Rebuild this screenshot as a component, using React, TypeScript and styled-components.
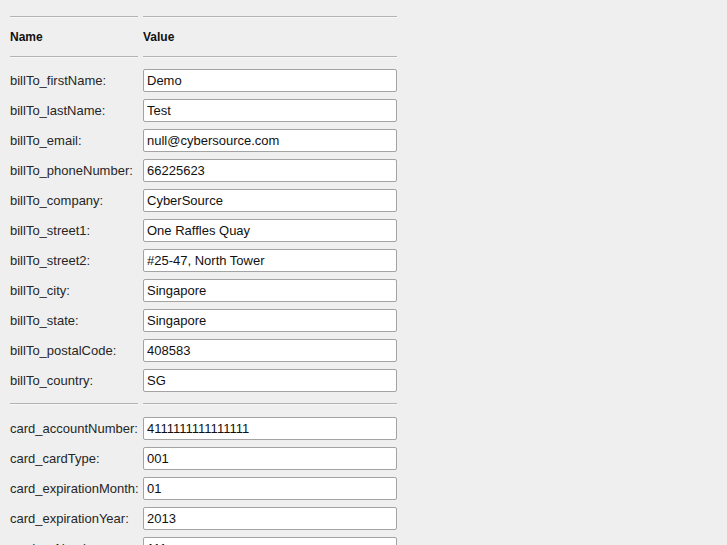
import React from "react";
import styled, { createGlobalStyle } from "styled-components";

const GlobalStyle = createGlobalStyle`
  html, body {
    margin: 0;
    padding: 0;
    background: #efefef;
    font-family: "Liberation Sans", Arial, sans-serif;
    overflow: hidden;
  }
`;

const Page = styled.div`
  padding: 16px 0 0 10px;
  width: 727px;
  height: 545px;
  box-sizing: border-box;
  background: #efefef;
`;

const Columns = styled.div<{ $mt?: number }>`
  display: grid;
  grid-template-columns: 128px 254px;
  column-gap: 5px;
  margin-top: ${(p) => p.$mt ?? 0}px;
`;

const Rule = styled.div`
  height: 0;
  border-top: 1px solid #b3b3b3;
  border-bottom: 1px solid #f7f7f7;
`;

const HeaderCell = styled.div`
  height: 38px;
  line-height: 38px;
  font-size: 12px;
  font-weight: bold;
  color: #111;
`;

const FieldList = styled.div<{ $mt: number }>`
  display: grid;
  grid-template-columns: 128px 254px;
  column-gap: 5px;
  row-gap: 7px;
  align-items: center;
  margin-top: ${(p) => p.$mt}px;
`;

const Label = styled.label`
  font-size: 13px;
  color: #262626;
  white-space: nowrap;
`;

const Input = styled.input`
  box-sizing: border-box;
  width: 254px;
  height: 23px;
  margin: 0;
  padding: 0 3px;
  border: 1px solid #a3a3a3;
  border-radius: 2px;
  background: #fff;
  font-family: "Liberation Sans", Arial, sans-serif;
  font-size: 13px;
  color: #111;
  outline: none;
`;

const billTo: [string, string][] = [
  ["billTo_firstName", "Demo"],
  ["billTo_lastName", "Test"],
  ["billTo_email", "null@cybersource.com"],
  ["billTo_phoneNumber", "66225623"],
  ["billTo_company", "CyberSource"],
  ["billTo_street1", "One Raffles Quay"],
  ["billTo_street2", "#25-47, North Tower"],
  ["billTo_city", "Singapore"],
  ["billTo_state", "Singapore"],
  ["billTo_postalCode", "408583"],
  ["billTo_country", "SG"],
];

const card: [string, string][] = [
  ["card_accountNumber", "4111111111111111"],
  ["card_cardType", "001"],
  ["card_expirationMonth", "01"],
  ["card_expirationYear", "2013"],
  ["card_cvNumber", "111"],
];

function Fields({ items, mt }: { items: [string, string][]; mt: number }) {
  return (
    <FieldList $mt={mt}>
      {items.map(([name, value]) => (
        <React.Fragment key={name}>
          <Label htmlFor={name}>{name}:</Label>
          <Input id={name} name={name} defaultValue={value} />
        </React.Fragment>
      ))}
    </FieldList>
  );
}

export default function App() {
  return (
    <>
      <GlobalStyle />
      <Page>
        <Columns>
          <Rule />
          <Rule />
        </Columns>
        <Columns>
          <HeaderCell>Name</HeaderCell>
          <HeaderCell>Value</HeaderCell>
        </Columns>
        <Columns>
          <Rule />
          <Rule />
        </Columns>
        <Fields items={billTo} mt={11} />
        <Columns $mt={11}>
          <Rule />
          <Rule />
        </Columns>
        <Fields items={card} mt={12} />
      </Page>
    </>
  );
}
